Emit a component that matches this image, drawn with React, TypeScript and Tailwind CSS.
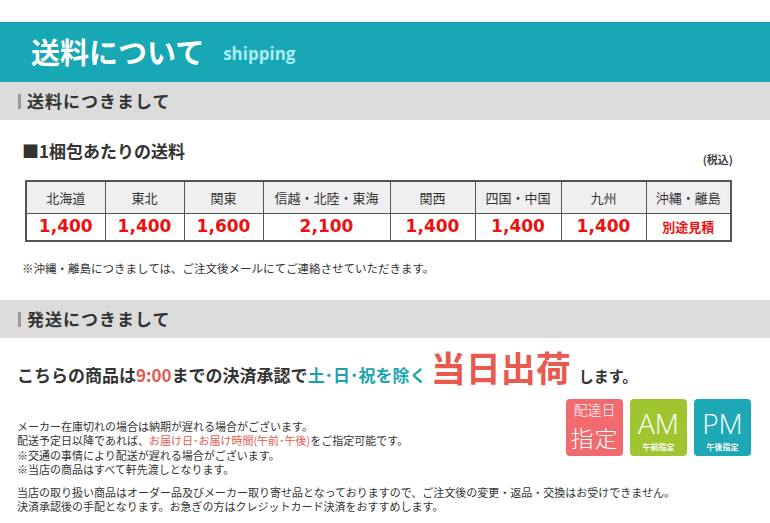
import React from "react";

const jp = { fontFamily: '"Noto Sans CJK JP", "Noto Sans", sans-serif' };

function SectionBar({ title }: { title: string }) {
  return (
    <div className="h-[38px] bg-[#dcdcdc] flex items-center pl-[18px]">
      <span className="w-[3px] h-[15px] bg-[#9a9a9a] mr-[6px]" />
      <span className="text-[17px] font-bold text-[#333] tracking-[1px]">{title}</span>
    </div>
  );
}

const cols = [
  { h: "北海道", v: "1,400", w: 79 },
  { h: "東北", v: "1,400", w: 79 },
  { h: "関東", v: "1,600", w: 79 },
  { h: "信越・北陸・東海", v: "2,100", w: 127 },
  { h: "関西", v: "1,400", w: 85 },
  { h: "四国・中国", v: "1,400", w: 86 },
  { h: "九州", v: "1,400", w: 85 },
  { h: "沖縄・離島", v: "別途見積", w: 85 },
];

export default function App() {
  return (
    <div className="w-[770px] h-[523px] bg-white overflow-hidden text-[#333]" style={jp}>
      <div className="h-[22px]" />
      <div className="h-[60px] bg-[#17a7b5] flex items-center pl-[31px]">
        <span className="text-white text-[29px] font-bold">送料について</span>
        <span className="text-[#a9ecf2] text-[17px] font-bold ml-[19px] mt-[3px]" style={{ fontFamily: '"Open Sans", sans-serif' }}>shipping</span>
      </div>
      <SectionBar title="送料につきまして" />
      <div className="pt-[21px] pl-[22px] text-[17px] font-bold leading-[20px] text-[#333]">■1梱包あたりの送料</div>
      <div className="flex justify-end pr-[37px] text-[11px] leading-[12px] -mt-[8px] font-bold text-[#444]">(税込)</div>
      <div className="pl-[25px] pt-[15px]">
        <table className="border-collapse border-2 border-[#555]" style={{ fontFamily: '"DejaVu Sans", "Noto Sans CJK JP", sans-serif' }}>
          <tbody>
            <tr className="bg-[#efefef] h-[32px]">
              {cols.map((c) => (
                <td key={c.h} className="border border-[#555] text-center text-[13px] text-[#333] p-0" style={{ width: c.w, ...jp }}>
                  {c.h}
                </td>
              ))}
            </tr>
            <tr className="h-[28px]">
              {cols.map((c, i) => (
                <td
                  key={i}
                  className={
                    "border border-[#555] text-center text-[#ee1111] font-bold p-0 " +
                    (i === 7 ? "text-[13px]" : "text-[17px]")
                  }
                  style={i === 7 ? jp : undefined}
                >
                  {c.v}
                </td>
              ))}
            </tr>
          </tbody>
        </table>
      </div>
      <div className="pl-[22px] pt-[19px] text-[11.5px] leading-[14px] text-[#333]">
        ※沖縄・離島につきましては、ご注文後メールにてご連絡させていただきます。
      </div>
      <div className="h-[25px]" />
      <SectionBar title="発送につきまして" />
      <div className="pl-[17px] pt-[9px] flex items-baseline font-bold text-[#333]">
        <span className="text-[17px]">こちらの商品は</span>
        <span className="text-[17px] text-[#e25b4f]">9:00</span>
        <span className="text-[17px]">までの決済承認で</span>
        <span className="text-[17px] text-[#1da3b0]">土･日･祝を除く</span>
        <span className="text-[35px] leading-[40px] text-[#e85a50] ml-[4px]">当日出荷</span>
        <span className="text-[15px] ml-[8px]">します。</span>
      </div>
      <div className="flex pl-[17px] pr-[19px] mt-[11px]">
        <div className="flex-1 pt-[20px] text-[11px] leading-[14.5px] text-[#333]">
          <div>メーカー在庫切れの場合は納期が遅れる場合がございます。</div>
          <div>
            配送予定日以降であれば、<span className="text-[#e25b4f]">お届け日･お届け時間(午前･午後)</span>をご指定可能です。
          </div>
          <div>※交通の事情により配送が遅れる場合がございます。</div>
          <div>※当店の商品はすべて軒先渡しとなります。</div>
        </div>
        <div className="flex gap-[7px]">
          <div className="w-[57px] h-[57px] rounded-[4px] bg-[#f06a6e] text-white flex flex-col items-center justify-center font-light">
            <div className="text-[14px] leading-normal">配達日</div>
            <div className="text-[23px] leading-normal tracking-[1px]">指定</div>
          </div>
          <div className="w-[57px] h-[57px] rounded-[4px] bg-[#9fc630] text-white flex flex-col items-center justify-center">
            <div className="text-[28px] leading-normal font-light -mb-[3px]" style={{ fontFamily: '"Open Sans", sans-serif' }}>AM</div>
            <div className="text-[8px] leading-normal font-bold">午前指定</div>
          </div>
          <div className="w-[57px] h-[57px] rounded-[4px] bg-[#1ea8b6] text-white flex flex-col items-center justify-center">
            <div className="text-[28px] leading-normal font-light -mb-[3px]" style={{ fontFamily: '"Open Sans", sans-serif' }}>PM</div>
            <div className="text-[8px] leading-normal font-bold">午後指定</div>
          </div>
        </div>
      </div>
      <div className="pl-[17px] pt-[8px] text-[11px] leading-[14.5px] text-[#333]">
        <div>当店の取り扱い商品はオーダー品及びメーカー取り寄せ品となっておりますので、ご注文後の変更・返品・交換はお受けできません。</div>
        <div>決済承認後の手配となります。お急ぎの方はクレジットカード決済をおすすめします。</div>
      </div>
    </div>
  );
}
